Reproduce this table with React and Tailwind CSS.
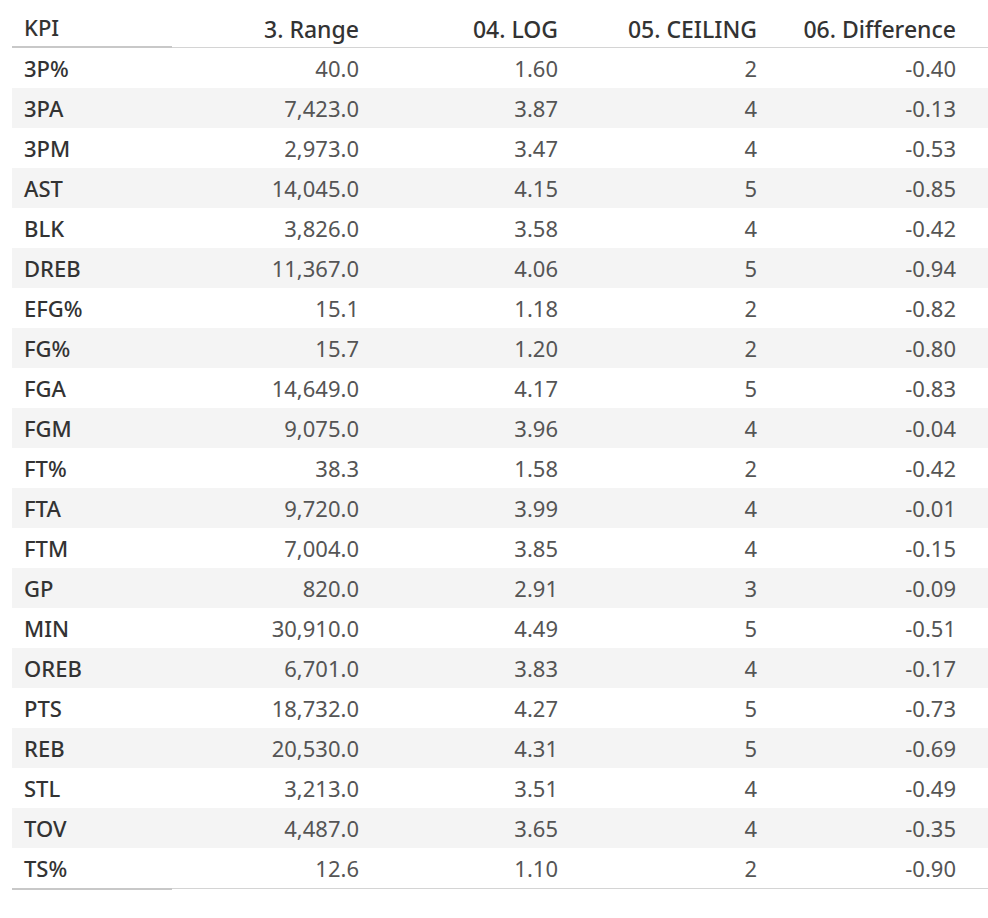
const rows = [
    ['3P%', '40.0', '1.60', '2', '-0.40'],
    ['3PA', '7,423.0', '3.87', '4', '-0.13'],
    ['3PM', '2,973.0', '3.47', '4', '-0.53'],
    ['AST', '14,045.0', '4.15', '5', '-0.85'],
    ['BLK', '3,826.0', '3.58', '4', '-0.42'],
    ['DREB', '11,367.0', '4.06', '5', '-0.94'],
    ['EFG%', '15.1', '1.18', '2', '-0.82'],
    ['FG%', '15.7', '1.20', '2', '-0.80'],
    ['FGA', '14,649.0', '4.17', '5', '-0.83'],
    ['FGM', '9,075.0', '3.96', '4', '-0.04'],
    ['FT%', '38.3', '1.58', '2', '-0.42'],
    ['FTA', '9,720.0', '3.99', '4', '-0.01'],
    ['FTM', '7,004.0', '3.85', '4', '-0.15'],
    ['GP', '820.0', '2.91', '3', '-0.09'],
    ['MIN', '30,910.0', '4.49', '5', '-0.51'],
    ['OREB', '6,701.0', '3.83', '4', '-0.17'],
    ['PTS', '18,732.0', '4.27', '5', '-0.73'],
    ['REB', '20,530.0', '4.31', '5', '-0.69'],
    ['STL', '3,213.0', '3.51', '4', '-0.49'],
    ['TOV', '4,487.0', '3.65', '4', '-0.35'],
    ['TS%', '12.6', '1.10', '2', '-0.90'],
];

const headers = ['3. Range', '04. LOG', '05. CEILING', '06. Difference'];

export default function App() {
    return (
        <div
            className="h-[918px] w-[988px] bg-white pl-3 text-[22px] text-[#333]"
            style={{ fontFamily: '"Noto Sans", "Open Sans", sans-serif' }}
        >
            {/* header, rule sits on its bottom edge */}
            <div className="flex h-[48px]">
                <div className="flex w-[160px] items-center border-b-2 border-[#c8c8c8] pl-3 pt-[9px] font-medium">
                    KPI
                </div>
                <div className="flex flex-1 border-b border-[#d4d4d4]">
                    {headers.map((h) => (
                        <div
                            key={h}
                            className="flex h-full w-[199px] items-center justify-end pr-3 pt-[11px] text-[23px] font-medium"
                        >
                            {h}
                        </div>
                    ))}
                </div>
            </div>

            {rows.map((row, i) => (
                <div
                    key={row[0]}
                    className={`flex h-[40px] items-center ${i % 2 === 1 ? 'bg-[#f4f4f4]' : 'bg-white'}`}
                >
                    <div className="w-[160px] pl-3 font-medium text-[#333]">{row[0]}</div>
                    {row.slice(1).map((v, j) => (
                        <div key={j} className="w-[199px] pr-3 text-right text-[#555]">
                            {v}
                        </div>
                    ))}
                </div>
            ))}

            <div className="flex items-start">
                <div className="h-[2px] w-[160px] bg-[#c8c8c8]" />
                <div className="h-px flex-1 bg-[#d4d4d4]" />
            </div>
        </div>
    );
}
